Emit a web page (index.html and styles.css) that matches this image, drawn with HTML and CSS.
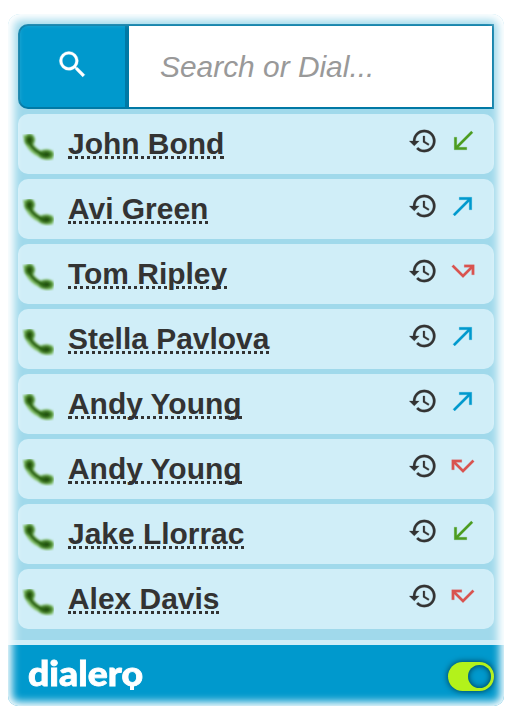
FILE: index.html
```
<!DOCTYPE html>
<html lang="en">
<head>
<meta charset="utf-8">
<title>Dialer</title>
<link rel="stylesheet" href="styles.css">
</head>
<body>
<svg class="defs" width="0" height="0">
  <defs>
    <radialGradient id="end"><stop offset="0" stop-color="#173f08"/><stop offset=".45" stop-color="#2b6114"/><stop offset="1" stop-color="#72b552"/></radialGradient>
    <filter id="soft" x="-10%" y="-10%" width="120%" height="120%"><feGaussianBlur stdDeviation=".8"/></filter>
    <symbol id="phone" viewBox="0 0 32 27">
      <g filter="url(#soft)">
        <path d="M1 1H11Q13 5 11 9Q14 15 20 17Q25 14 31 17V25Q25 27 19 24Q7 19 3 9Z" fill="#80bf63"/>
        <ellipse cx="7.5" cy="6" rx="5.5" ry="6.5" fill="url(#end)"/>
        <ellipse cx="24" cy="20.5" rx="8" ry="5" fill="url(#end)"/>
        <path d="M7 8Q12 18 23 21" fill="none" stroke="#28600f" stroke-width="3.2"/>
      </g>
    </symbol>
    <symbol id="history" viewBox="0 0 24 24"><path d="M13 3a9 9 0 0 0-9 9H1l3.89 3.89.07.14L9 12H6c0-3.87 3.13-7 7-7s7 3.13 7 7-3.13 7-7 7c-1.93 0-3.68-.79-4.94-2.06l-1.42 1.42A8.95 8.95 0 0 0 13 21a9 9 0 0 0 0-18zm-1 5v5l4.28 2.54.72-1.21-3.5-2.08V8H12z"/></symbol>
    <symbol id="in" viewBox="0 0 24 24"><path d="M20 5.41L18.59 4 7 15.59V9H5v10h10v-2H8.41z"/></symbol>
    <symbol id="out" viewBox="0 0 24 24"><path d="M9 5v2h6.59L4 18.59 5.41 20 17 8.41V15h2V5z"/></symbol>
    <symbol id="missed-out" viewBox="0 0 24 24"><path d="M3 8.41l9 9 7-7V15h2V7h-8v2h4.59L12 14.59 4.41 7z"/></symbol>
    <symbol id="missed" viewBox="0 0 24 24"><path d="M19.59 7L12 14.59 6.41 9H11V7H3v8h2v-4.59l7 7 9-9z"/></symbol>
  </defs>
</svg>
<main class="panel">
  <form class="search">
    <button class="search-button" type="button" aria-label="Search">
      <svg viewBox="0 0 24 24"><path d="M15.5 14h-.79l-.28-.27A6.471 6.471 0 0 0 16 9.5 6.5 6.5 0 1 0 9.5 16c1.61 0 3.09-.59 4.23-1.57l.27.28v.79l5 4.99L20.49 19l-4.99-5zm-6 0C7.01 14 5 11.99 5 9.5S7.01 5 9.5 5 14 7.01 14 9.5 11.99 14 9.5 14z"/></svg>
    </button>
    <input class="search-input" type="text" placeholder="Search or Dial...">
  </form>
  <ul class="calls">
    <li class="call"><svg class="phone"><use href="#phone"/></svg><span class="name">John Bond</span><svg class="icon history"><use href="#history"/></svg><svg class="icon received"><use href="#in"/></svg></li>
    <li class="call"><svg class="phone"><use href="#phone"/></svg><span class="name">Avi Green</span><svg class="icon history"><use href="#history"/></svg><svg class="icon made"><use href="#out"/></svg></li>
    <li class="call"><svg class="phone"><use href="#phone"/></svg><span class="name">Tom Ripley</span><svg class="icon history"><use href="#history"/></svg><svg class="icon lost"><use href="#missed-out"/></svg></li>
    <li class="call"><svg class="phone"><use href="#phone"/></svg><span class="name">Stella Pavlova</span><svg class="icon history"><use href="#history"/></svg><svg class="icon made"><use href="#out"/></svg></li>
    <li class="call"><svg class="phone"><use href="#phone"/></svg><span class="name">Andy Young</span><svg class="icon history"><use href="#history"/></svg><svg class="icon made"><use href="#out"/></svg></li>
    <li class="call"><svg class="phone"><use href="#phone"/></svg><span class="name">Andy Young</span><svg class="icon history"><use href="#history"/></svg><svg class="icon lost"><use href="#missed"/></svg></li>
    <li class="call"><svg class="phone"><use href="#phone"/></svg><span class="name">Jake Llorrac</span><svg class="icon history"><use href="#history"/></svg><svg class="icon received"><use href="#in"/></svg></li>
    <li class="call"><svg class="phone"><use href="#phone"/></svg><span class="name">Alex Davis</span><svg class="icon history"><use href="#history"/></svg><svg class="icon lost"><use href="#missed"/></svg></li>
  </ul>
  <footer class="footer">
    <svg class="logo" viewBox="0 0 118 34">
      <text x="0" y="28" textLength="115" lengthAdjust="spacingAndGlyphs">dialero</text>
      <path d="M104 27v5"/>
    </svg>
    <span class="toggle"><span class="knob"></span></span>
  </footer>
</main>
</body>
</html>
```
FILE: styles.css
```
* { box-sizing: border-box; }
body { margin: 0; background: #fff; font-family: "Liberation Sans", Arial, sans-serif; }
.defs { position: absolute; }
.panel {
  position: relative;
  display: flex;
  flex-direction: column;
  width: 496px;
  height: 692px;
  margin: 14px 8px 0;
  padding-top: 10px;
  background: #a0d9eb;
}
.panel::before {
  content: "";
  position: absolute;
  z-index: 1;
  inset: 0;
  border-radius: 12px;
  box-shadow: inset 0 0 9px 6px #fff, 0 0 0 10px #fff;
  clip-path: inset(0 0 66px);
  pointer-events: none;
}
.search { display: flex; height: 85px; margin: 0 10px; }
.search-button {
  width: 111px;
  padding: 0 0 4px;
  border: 2px solid #0079a5;
  border-right-width: 4px;
  border-radius: 10px 0 0 10px;
  background: #0099cd;
  display: flex;
  align-items: center;
  justify-content: center;
}
.search-button svg { width: 35px; height: 35px; fill: #fff; stroke: #fff; stroke-width: .2px; }
.search-input {
  flex: 1;
  min-width: 0;
  padding: 0 0 0 31px;
  border: 2px solid #0079a5;
  border-left: 0;
  border-radius: 0;
  background: #fff;
  font: italic 29.9px "Liberation Sans", Arial, sans-serif;
}
.search-input::placeholder { color: #999; }
.calls { list-style: none; display: flex; flex-direction: column; gap: 5px; margin: 5px 10px 0; padding: 0; }
.call {
  display: flex;
  align-items: flex-start;
  height: 60px;
  padding: 12px 16.5px 0 4px;
  border-radius: 10px;
  background: #d0eef8;
}
.phone { width: 32px; height: 27px; margin-top: 7.5px; }
.name {
  height: 33px;
  margin: 0 auto 0 14px;
  border-bottom: 3px dotted #333;
  color: #333;
  font-size: 29.95px;
  font-weight: bold;
  line-height: 36px;
}
.icon { width: 30px; height: 30px; margin: .2px 0 0 10px; fill: #333; }
.history { stroke: #333; stroke-width: .2px; }
.received { fill: #4c9c20; stroke: #4c9c20; stroke-width: .2px; }
.made { fill: #0099cd; stroke: #0099cd; stroke-width: .2px; }
.lost { fill: #d9534f; stroke: #d9534f; stroke-width: .2px; }
.footer {
  position: relative;
  display: flex;
  justify-content: space-between;
  align-items: flex-start;
  margin-top: auto;
  height: 66px;
  padding: 17px 10px 0 20px;
  border-top: 5px solid #d0eef8;
  background: #0099cd;
}
.footer::after {
  content: "";
  position: absolute;
  inset: -20px 0 0;
  border-radius: 10px;
  box-shadow: inset 0 0 9px 4px #fff, 0 0 0 8px #fff;
  clip-path: inset(15px 0 0);
  pointer-events: none;
}
.logo { width: 118px; height: 34px; margin-top: -4px; overflow: visible; filter: blur(.5px); }
.logo text { font: 900 34px Lato, sans-serif; fill: #fff; stroke: #fff; stroke-width: .8; }
.logo path { stroke: #fff; stroke-width: 4; }
.toggle {
  display: flex;
  justify-content: flex-end;
  align-items: center;
  width: 46px;
  height: 29px;
  padding-right: 3px;
  border-radius: 15px;
  background: #b3f21b;
  box-shadow: 0 0 6px rgba(0, 0, 0, .65);
}
.knob { width: 23px; height: 23px; border-radius: 50%; background: #0099cd; box-shadow: inset 0 0 6px rgba(0, 0, 0, .65); }
```
